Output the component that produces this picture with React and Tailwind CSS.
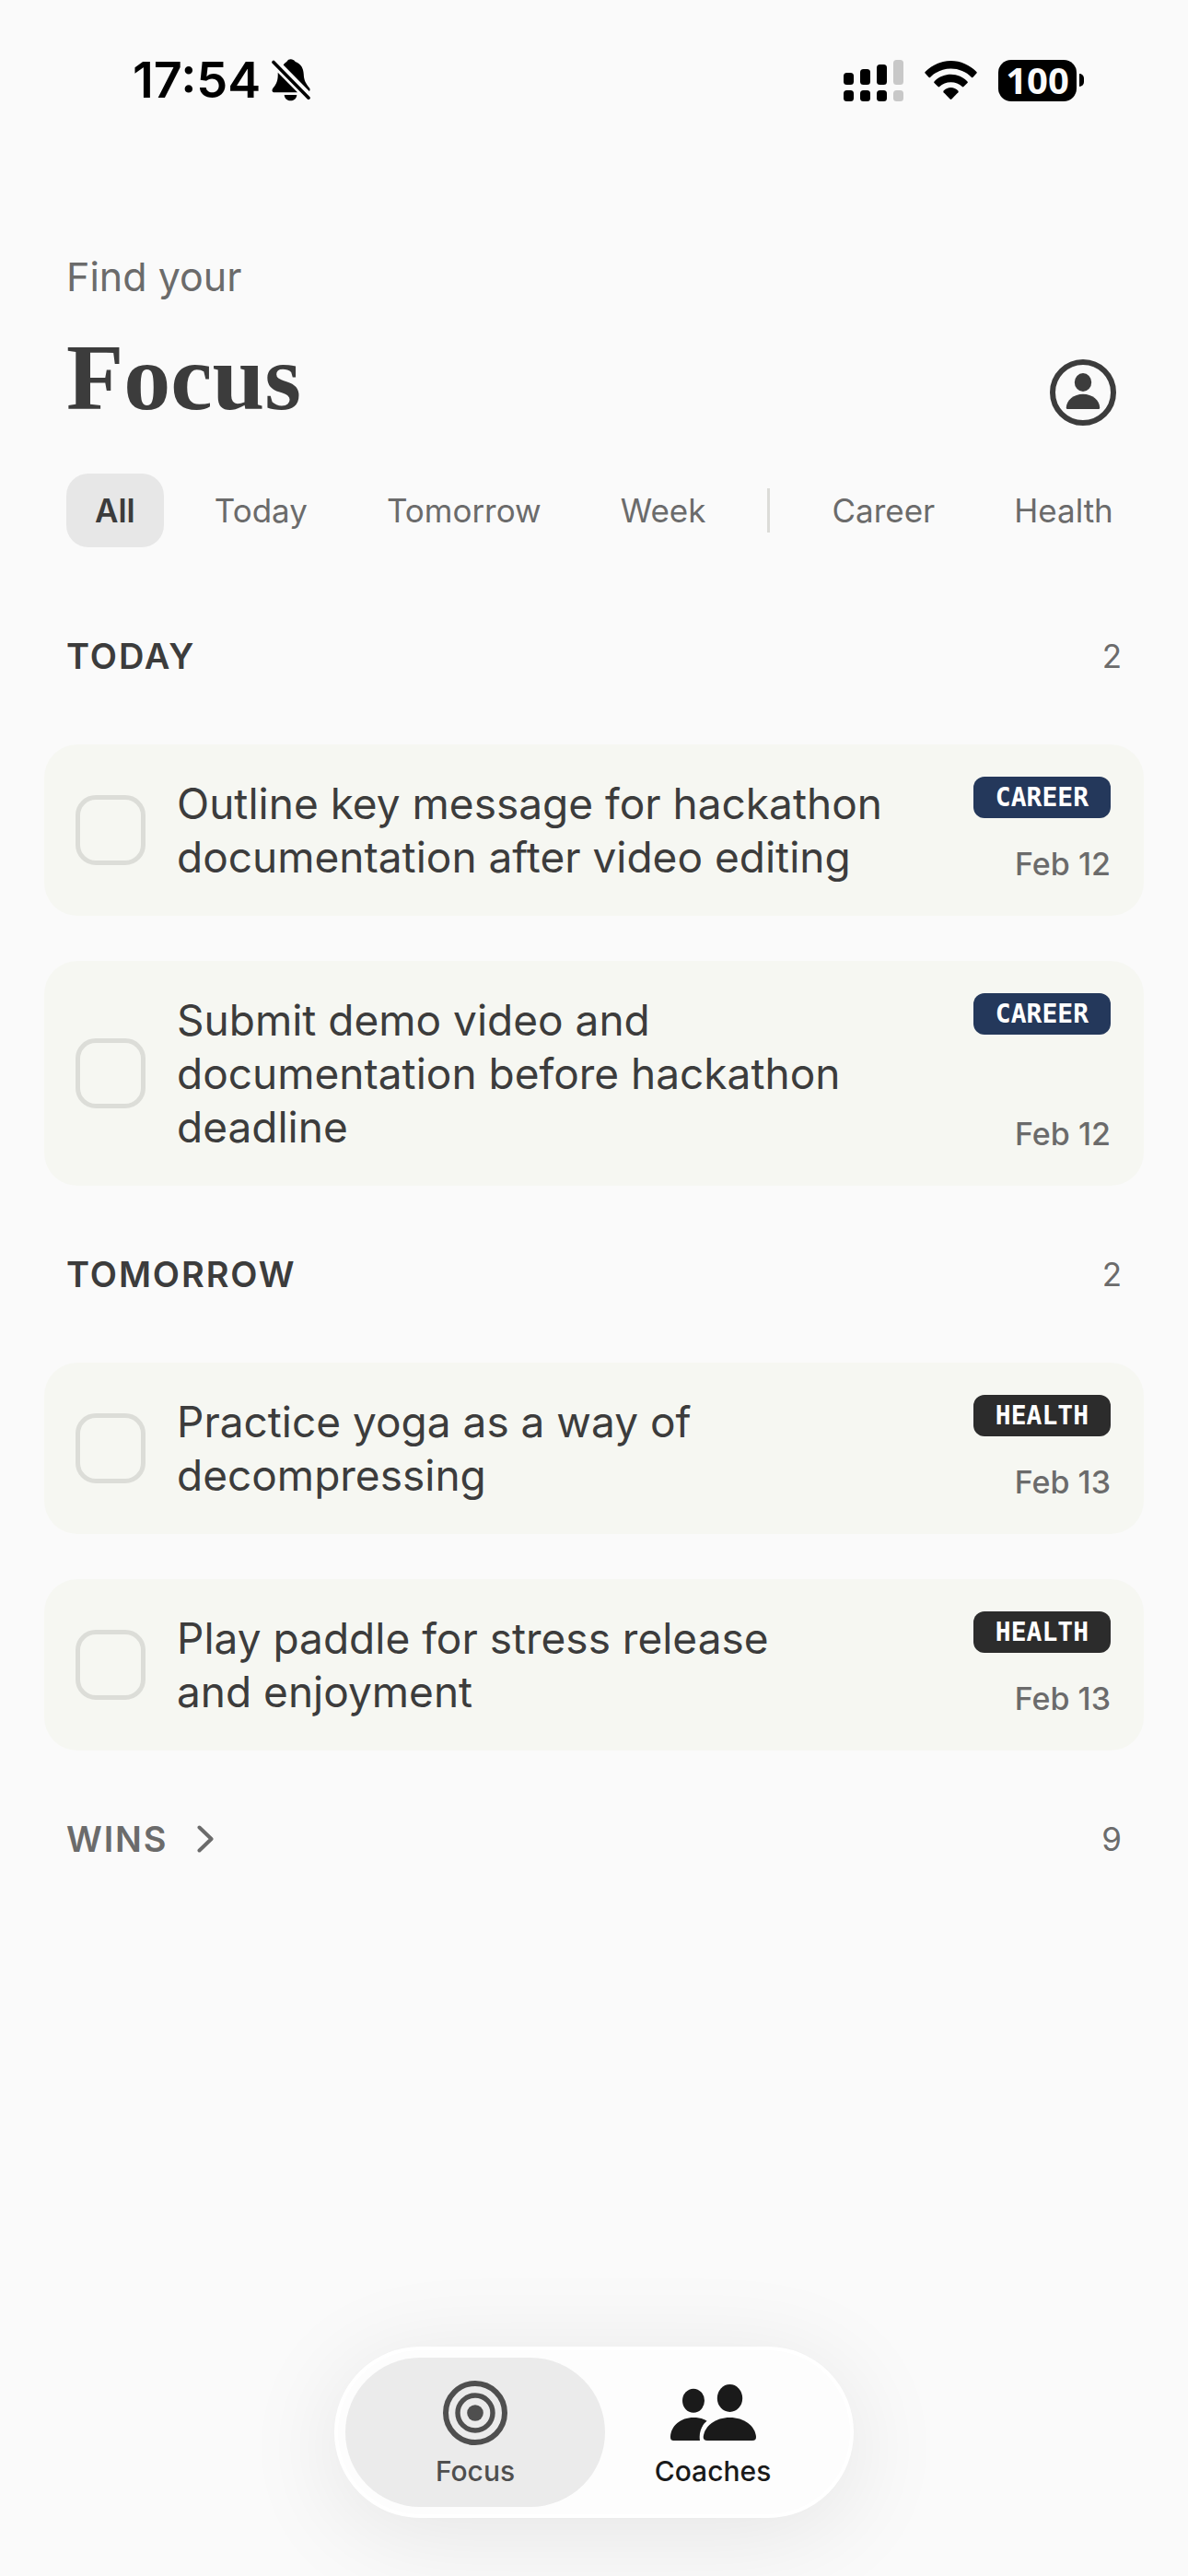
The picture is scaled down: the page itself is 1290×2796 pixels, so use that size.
import { useState } from 'react'

const FILTERS = ['All', 'Today', 'Tomorrow', 'Week']
const AREAS = ['Career', 'Health']

const SECTIONS = [
  {
    title: 'TODAY',
    tasks: [
      { id: 't1', text: 'Outline key message for hackathon\ndocumentation after video editing', area: 'CAREER', date: 'Feb 12' },
      { id: 't2', text: 'Submit demo video and\ndocumentation before hackathon\ndeadline', area: 'CAREER', date: 'Feb 12' },
    ],
  },
  {
    title: 'TOMORROW',
    tasks: [
      { id: 't3', text: 'Practice yoga as a way of\ndecompressing', area: 'HEALTH', date: 'Feb 13' },
      { id: 't4', text: 'Play paddle for stress release\nand enjoyment', area: 'HEALTH', date: 'Feb 13' },
    ],
  },
]

const AREA_COLORS = {
  CAREER: 'bg-[#24385b]',
  HEALTH: 'bg-[#2c2c2c]',
}

function BellOffIcon() {
  return (
    <svg className="w-[42px] h-[46px]" viewBox="0 0 42 46" fill="currentColor" aria-hidden="true">
      <path d="M6.7 14.7C7 22 6 26 2 31C-.3 33.6 0 36.3 3.3 36.3H28Z" />
      <path d="M12.7 6.5C13.5 5 15 4 16.3 3C17.5 1 19 .3 20.7 .3C22.5 .3 24.5 1.3 25.7 3C32 5.5 34.5 10 34.8 17C35 23 37 26.5 41 31.5C42 33 41.5 34.5 40.8 35Z" />
      <path d="M13.7 39H27.3C27 43 24 45.3 20.5 45.3C17 45.3 14 43 13.7 39Z" />
      <path d="M2 3.5L40 42.2" stroke="currentColor" strokeWidth="3.6" strokeLinecap="round" />
    </svg>
  )
}

function SignalIcon() {
  return (
    <svg className="w-[65px] h-[45px]" viewBox="0 0 65 45" fill="currentColor" aria-hidden="true">
      <rect x="0" y="14" width="11" height="13" rx="3.5" />
      <rect x="18" y="10" width="11" height="17" rx="3.5" />
      <rect x="36" y="5" width="11" height="22" rx="3.5" />
      <rect x="54" y="0" width="11" height="27" rx="3.5" fill="#c8c8c8" />
      <rect x="0" y="33" width="11" height="12" rx="3.5" />
      <rect x="18" y="33" width="11" height="12" rx="3.5" />
      <rect x="36" y="33" width="11" height="12" rx="3.5" />
      <rect x="54" y="33" width="11" height="12" rx="3.5" fill="#c8c8c8" />
    </svg>
  )
}

function WifiIcon() {
  return (
    <svg className="w-[57px] h-[43px]" viewBox="0 0 57 43" fill="currentColor" aria-hidden="true">
      <path d="M.6 12C8 4.5 18 0 28.5 0S49 4.5 56.4 12Q57.2 12.8 56.4 13.6L52.6 17.8Q51.8 18.6 51 17.9C45 12 37.2 8.6 28.5 8.6S12 12 6 17.9Q5.2 18.6 4.4 17.8L.6 13.6Q-.2 12.8 .6 12Z" />
      <path d="M10.5 22.4C15 17.6 21.5 14.7 28.5 14.7S42 17.6 46.5 22.4Q47.2 23.2 46.5 24L42.4 28.1Q41.6 28.8 40.8 28.1C37.6 25 33.3 23.2 28.5 23.2S19.4 25 16.2 28.1Q15.4 28.8 14.6 28.1L10.5 24Q9.8 23.2 10.5 22.4Z" />
      <path d="M20.6 32.6C22.8 30.4 25.5 29 28.5 29S34.2 30.4 36.4 32.6Q37.1 33.4 36.4 34.2L29.4 41.5Q28.5 42.4 27.6 41.5L20.6 34.2Q19.9 33.4 20.6 32.6Z" />
    </svg>
  )
}

function AccountIcon() {
  return (
    <svg className="w-[72px] h-[72px]" viewBox="0 0 72 72" fill="currentColor" aria-hidden="true">
      <circle cx="36" cy="36" r="33" fill="none" stroke="currentColor" strokeWidth="6" />
      <ellipse cx="36" cy="25" rx="9.2" ry="10" />
      <path d="M19 54Q17.8 54 17.8 52.5C18 44.5 26 37.8 36 37.8S54 44.5 54.2 52.5Q54.2 54 53 54Z" />
    </svg>
  )
}

function TargetIcon() {
  return (
    <svg className="w-[70px] h-[70px]" viewBox="0 0 70 70" fill="none" stroke="currentColor" aria-hidden="true">
      <circle cx="35" cy="35" r="32" strokeWidth="6" />
      <circle cx="35" cy="35" r="19" strokeWidth="5.4" />
      <circle cx="35" cy="35" r="8.8" fill="currentColor" stroke="none" />
    </svg>
  )
}

function CoachesIcon() {
  return (
    <svg className="w-[93px] h-[70px]" viewBox="0 -4 93 70" fill="currentColor" aria-hidden="true">
      <ellipse cx="25" cy="17.7" rx="12" ry="13" />
      <ellipse cx="64.5" cy="15" rx="13.7" ry="15" />
      <path d="M4 61C1 61 0 60 0 57C.5 45 11 36 25 36C31 36 36 37.3 39.6 39.7C34 44 30.6 52 32 61Z" />
      <path d="M40 61C37 61 35.7 59.7 35.7 57C37 45 49 36 64.5 36S92 45 93 57C93 59.7 92 61 89 61Z" />
    </svg>
  )
}

function StatusBar() {
  return (
    <div className="h-[174px] pl-36 pr-[113px] flex items-center justify-between text-black">
      <div className="flex items-center gap-3">
        <span className="text-[54px] leading-[60px] font-semibold">17:54</span>
        <BellOffIcon />
      </div>
      <div className="flex items-center gap-[23px]">
        <SignalIcon />
        <WifiIcon />
        <div className="flex items-center gap-[3px]">
          <span className="w-[85px] h-[45px] rounded-[14px] bg-black text-[#fafafa] text-[40px] leading-[43px] font-bold font-['Open_Sans',sans-serif] text-center">
            100
          </span>
          <span className="w-[5px] h-[14px] rounded-r-full bg-black" />
        </div>
      </div>
    </div>
  )
}

function FilterButton({ label, active, onClick }) {
  return (
    <button
      onClick={onClick}
      aria-pressed={active}
      className={`h-20 px-[31px] rounded-3xl text-[35px] leading-[44px] shrink-0 ${
        active ? 'bg-[#e7e7e7] text-[#3c3c3c] font-semibold' : 'text-[#6b6b6b]'
      }`}
    >
      {label}
    </button>
  )
}

function TaskCard({ task, done, onToggle }) {
  return (
    <li className="flex gap-[34px] py-[35px] pl-[34px] pr-9 rounded-[36px] bg-[#f6f7f2]">
      <input
        id={task.id}
        type="checkbox"
        checked={done}
        onChange={onToggle}
        className="appearance-none self-center shrink-0 size-[76px] rounded-[22px] border-5 border-[#dcddd8] checked:bg-[#dcddd8]"
      />
      <label htmlFor={task.id} className="flex-1 whitespace-pre-line text-[46px] leading-[58px] text-[#3c3c3c]">
        {task.text}
      </label>
      <div className="flex flex-col justify-between items-end">
        <span
          className={`h-[45px] px-6 rounded-xl text-white text-[28px] leading-[45px] font-bold font-['DejaVu_Sans_Mono',monospace] ${AREA_COLORS[task.area]}`}
        >
          {task.area}
        </span>
        <span className="text-[34px] leading-[42px] font-medium text-[#6b6b6b]">{task.date}</span>
      </div>
    </li>
  )
}

export default function App() {
  const [filter, setFilter] = useState('All')
  const [done, setDone] = useState({})
  const [tab, setTab] = useState('Focus')

  const toggle = (id) => setDone((prev) => ({ ...prev, [id]: !prev[id] }))
  const tabs = [
    { name: 'Focus', Icon: TargetIcon },
    { name: 'Coaches', Icon: CoachesIcon },
  ]

  return (
    <div className="min-h-screen flex flex-col bg-[#fafafa] font-['Inter',sans-serif]">
      <StatusBar />

      {/* Header */}
      <header className="px-[72px] pt-[98px]">
        <p className="text-[43px] leading-[56px] text-[#6b6b6b]">Find your</p>
        <div className="mt-[30px] flex items-end justify-between">
          <h1 className="text-[102px] leading-[104px] font-bold font-['Liberation_Serif',serif] text-[#3c3c3c]">
            Focus
          </h1>
          <button aria-label="Account" className="mr-1.5 text-[#3c3c3c]">
            <AccountIcon />
          </button>
        </div>
      </header>

      {/* Filters */}
      <div className="mt-[52px] pl-[72px] flex items-center gap-6 overflow-x-auto [scrollbar-width:none]">
        {FILTERS.map((f) => (
          <FilterButton key={f} label={f} active={filter === f} onClick={() => setFilter(f)} />
        ))}
        <span className="w-[3px] h-12 mx-3 shrink-0 bg-[#dcdcd8]" />
        {AREAS.map((f) => (
          <FilterButton key={f} label={f} active={filter === f} onClick={() => setFilter(f)} />
        ))}
      </div>

      {/* Tasks */}
      <main className="mt-[22px] px-12 flex-1">
        {SECTIONS.map((section) => (
          <section key={section.title}>
            <div className="h-48 px-6 flex items-center justify-between">
              <h2 className="text-[38px] leading-[48px] font-semibold tracking-wider text-[#3c3c3c]">{section.title}</h2>
              <span className="text-[35px] leading-[44px] text-[#6b6b6b]">{section.tasks.length}</span>
            </div>
            <ul className="flex flex-col gap-[49px]">
              {section.tasks.map((task) => (
                <TaskCard key={task.id} task={task} done={!!done[task.id]} onToggle={() => toggle(task.id)} />
              ))}
            </ul>
          </section>
        ))}
        <button className="w-full h-48 px-6 flex items-center justify-between text-[#6b6b6b]">
          <span className="flex items-center gap-8">
            <span className="text-[38px] leading-[48px] font-semibold tracking-wider">WINS</span>
            <svg className="w-[18px] h-[30px]" viewBox="0 0 18 30" fill="none" stroke="currentColor" aria-hidden="true">
              <path d="M2.5 2.5L15.5 15L2.5 27.5" strokeWidth="4" strokeLinecap="round" strokeLinejoin="round" />
            </svg>
          </span>
          <span className="text-[35px] leading-[44px]">9</span>
        </button>
      </main>

      {/* Tab bar */}
      <nav className="sticky bottom-[63px] mb-[63px] self-center flex p-2 rounded-full border-4 border-white bg-[#fdfdfd] shadow-[0_16px_110px_rgba(0,0,0,0.09)]">
        {tabs.map(({ name, Icon }) => (
          <button
            key={name}
            onClick={() => setTab(name)}
            className={`w-[282px] h-[162px] pt-1.5 not-first:-ml-6 rounded-full flex flex-col items-center justify-center gap-2 ${
              tab === name ? 'bg-[#ebebeb] text-[#4f4f4f]' : 'text-[#1a1a1a]'
            }`}
          >
            <Icon />
            <span className="text-[30px] leading-[40px] font-medium">{name}</span>
          </button>
        ))}
      </nav>
    </div>
  )
}
